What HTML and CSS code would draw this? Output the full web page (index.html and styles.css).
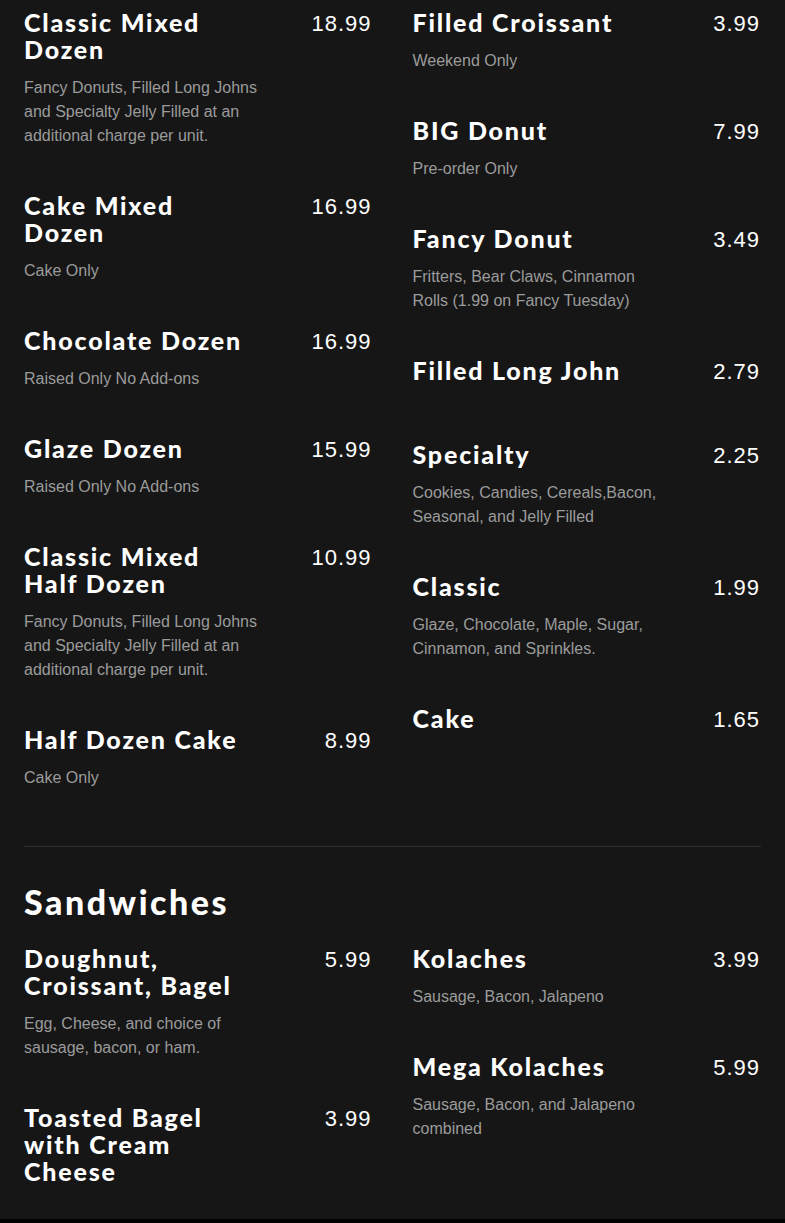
FILE: index.html
```html
<!DOCTYPE html>
<html lang="en">
<head>
<meta charset="utf-8">
<title>Menu</title>
<link rel="stylesheet" href="styles.css">
</head>
<body>
<main class="menu">
  <section class="section">
    <div class="grid">
      <div class="col">
        <div class="item">
          <div class="item-head"><h3 class="item-title">Classic Mixed Dozen</h3><span class="price">18.99</span></div>
          <p class="desc">Fancy Donuts, Filled Long Johns and Specialty Jelly Filled at an additional charge per unit.</p>
        </div>
        <div class="item">
          <div class="item-head"><h3 class="item-title">Cake Mixed Dozen</h3><span class="price">16.99</span></div>
          <p class="desc">Cake Only</p>
        </div>
        <div class="item">
          <div class="item-head"><h3 class="item-title">Chocolate Dozen</h3><span class="price">16.99</span></div>
          <p class="desc">Raised Only No Add-ons</p>
        </div>
        <div class="item">
          <div class="item-head"><h3 class="item-title">Glaze Dozen</h3><span class="price">15.99</span></div>
          <p class="desc">Raised Only No Add-ons</p>
        </div>
        <div class="item">
          <div class="item-head"><h3 class="item-title">Classic Mixed Half Dozen</h3><span class="price">10.99</span></div>
          <p class="desc">Fancy Donuts, Filled Long Johns and Specialty Jelly Filled at an additional charge per unit.</p>
        </div>
        <div class="item">
          <div class="item-head"><h3 class="item-title">Half Dozen Cake</h3><span class="price">8.99</span></div>
          <p class="desc">Cake Only</p>
        </div>
      </div>
      <div class="col">
        <div class="item">
          <div class="item-head"><h3 class="item-title">Filled Croissant</h3><span class="price">3.99</span></div>
          <p class="desc">Weekend Only</p>
        </div>
        <div class="item">
          <div class="item-head"><h3 class="item-title">BIG Donut</h3><span class="price">7.99</span></div>
          <p class="desc">Pre-order Only</p>
        </div>
        <div class="item">
          <div class="item-head"><h3 class="item-title">Fancy Donut</h3><span class="price">3.49</span></div>
          <p class="desc">Fritters, Bear Claws, Cinnamon Rolls (1.99 on Fancy Tuesday)</p>
        </div>
        <div class="item">
          <div class="item-head"><h3 class="item-title">Filled Long John</h3><span class="price">2.79</span></div>
          <p class="desc"></p>
        </div>
        <div class="item">
          <div class="item-head"><h3 class="item-title">Specialty</h3><span class="price">2.25</span></div>
          <p class="desc">Cookies, Candies, Cereals,Bacon, Seasonal, and Jelly Filled</p>
        </div>
        <div class="item">
          <div class="item-head"><h3 class="item-title">Classic</h3><span class="price">1.99</span></div>
          <p class="desc">Glaze, Chocolate, Maple, Sugar, Cinnamon, and Sprinkles.</p>
        </div>
        <div class="item">
          <div class="item-head"><h3 class="item-title">Cake</h3><span class="price">1.65</span></div>
          <p class="desc"></p>
        </div>
      </div>
    </div>
  </section>

  <section class="section section-divided">
    <h2 class="section-title">Sandwiches</h2>
    <div class="grid">
      <div class="col">
        <div class="item">
          <div class="item-head"><h3 class="item-title">Doughnut, Croissant, Bagel</h3><span class="price">5.99</span></div>
          <p class="desc">Egg, Cheese, and choice of sausage, bacon, or ham.</p>
        </div>
        <div class="item">
          <div class="item-head"><h3 class="item-title">Toasted Bagel with Cream Cheese</h3><span class="price">3.99</span></div>
          <p class="desc"></p>
        </div>
      </div>
      <div class="col">
        <div class="item">
          <div class="item-head"><h3 class="item-title">Kolaches</h3><span class="price">3.99</span></div>
          <p class="desc">Sausage, Bacon, Jalapeno</p>
        </div>
        <div class="item">
          <div class="item-head"><h3 class="item-title">Mega Kolaches</h3><span class="price">5.99</span></div>
          <p class="desc">Sausage, Bacon, and Jalapeno combined</p>
        </div>
      </div>
    </div>
  </section>
</main>
<footer class="footer"></footer>
</body>
</html>
```

FILE: styles.css
```css
html, body {
  margin: 0;
  padding: 0;
  background: #000;
}

.menu {
  background: #161616;
  padding: 9px 24px 0;
  height: 1210px;
  overflow: hidden;
}

.grid {
  display: grid;
  grid-template-columns: 1fr 1fr;
  column-gap: 40px;
}

.item {
  padding-bottom: 44px;
}

.item-head {
  display: flex;
  justify-content: space-between;
  align-items: flex-start;
}

.item-title {
  margin: 0;
  max-width: 236px;
  font-family: Lato, "Liberation Sans", sans-serif;
  font-weight: 900;
  font-size: 25px;
  line-height: 27px;
  letter-spacing: 1.8px;
  color: #fff;
}

.price {
  padding-top: 2px;
  padding-right: 1px;
  font-family: "Liberation Sans", Arial, sans-serif;
  font-size: 22px;
  line-height: 25px;
  letter-spacing: 1px;
  color: #fff;
}

.desc {
  margin: 13px 0 0;
  max-width: 258px;
  font-family: "Liberation Sans", Arial, sans-serif;
  font-size: 16px;
  line-height: 24px;
  color: #9b9b9b;
}

.section-divided {
  border-top: 1px solid #2e2e2e;
  margin-top: 12px;
  padding-top: 34px;
}

.section-title {
  margin: 0 0 23px;
  font-family: Lato, "Liberation Sans", sans-serif;
  font-weight: 900;
  font-size: 34px;
  line-height: 41px;
  letter-spacing: 2.5px;
  color: #fff;
}

.footer {
  height: 40px;
  background: #000;
}
```
